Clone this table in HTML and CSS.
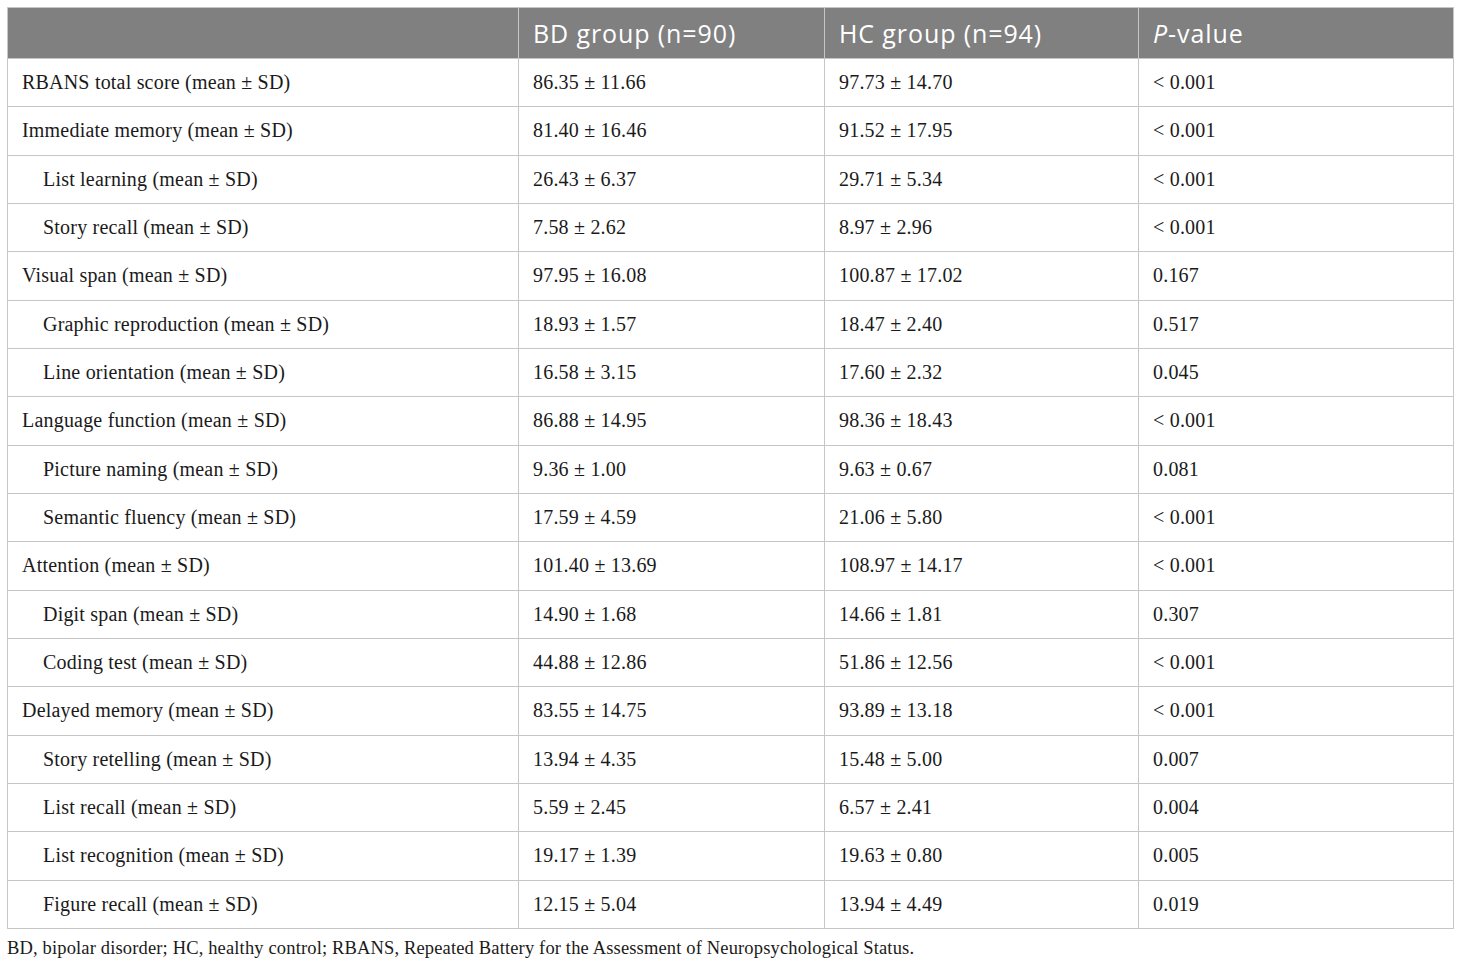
FILE: index.html
```html
<!DOCTYPE html>
<html lang="en">
<head>
<meta charset="UTF-8">
<title>RBANS scores</title>
<link rel="stylesheet" href="styles.css">
</head>
<body>

<table class="data">
  <colgroup>
    <col class="c1"><col class="c2"><col class="c3"><col class="c4">
  </colgroup>
  <thead>
    <tr>
      <th></th>
      <th>BD group (n=90)</th>
      <th>HC group (n=94)</th>
      <th><i>P</i>-value</th>
    </tr>
  </thead>
  <tbody>
    <tr><td>RBANS total score (mean ± SD)</td><td>86.35 ± 11.66</td><td>97.73 ± 14.70</td><td>&lt; 0.001</td></tr>
    <tr><td>Immediate memory (mean ± SD)</td><td>81.40 ± 16.46</td><td>91.52 ± 17.95</td><td>&lt; 0.001</td></tr>
    <tr><td class="sub">List learning (mean ± SD)</td><td>26.43 ± 6.37</td><td>29.71 ± 5.34</td><td>&lt; 0.001</td></tr>
    <tr><td class="sub">Story recall (mean ± SD)</td><td>7.58 ± 2.62</td><td>8.97 ± 2.96</td><td>&lt; 0.001</td></tr>
    <tr><td>Visual span (mean ± SD)</td><td>97.95 ± 16.08</td><td>100.87 ± 17.02</td><td>0.167</td></tr>
    <tr><td class="sub">Graphic reproduction (mean ± SD)</td><td>18.93 ± 1.57</td><td>18.47 ± 2.40</td><td>0.517</td></tr>
    <tr><td class="sub">Line orientation (mean ± SD)</td><td>16.58 ± 3.15</td><td>17.60 ± 2.32</td><td>0.045</td></tr>
    <tr><td>Language function (mean ± SD)</td><td>86.88 ± 14.95</td><td>98.36 ± 18.43</td><td>&lt; 0.001</td></tr>
    <tr><td class="sub">Picture naming (mean ± SD)</td><td>9.36 ± 1.00</td><td>9.63 ± 0.67</td><td>0.081</td></tr>
    <tr><td class="sub">Semantic fluency (mean ± SD)</td><td>17.59 ± 4.59</td><td>21.06 ± 5.80</td><td>&lt; 0.001</td></tr>
    <tr><td>Attention (mean ± SD)</td><td>101.40 ± 13.69</td><td>108.97 ± 14.17</td><td>&lt; 0.001</td></tr>
    <tr><td class="sub">Digit span (mean ± SD)</td><td>14.90 ± 1.68</td><td>14.66 ± 1.81</td><td>0.307</td></tr>
    <tr><td class="sub">Coding test (mean ± SD)</td><td>44.88 ± 12.86</td><td>51.86 ± 12.56</td><td>&lt; 0.001</td></tr>
    <tr><td>Delayed memory (mean ± SD)</td><td>83.55 ± 14.75</td><td>93.89 ± 13.18</td><td>&lt; 0.001</td></tr>
    <tr><td class="sub">Story retelling (mean ± SD)</td><td>13.94 ± 4.35</td><td>15.48 ± 5.00</td><td>0.007</td></tr>
    <tr><td class="sub">List recall (mean ± SD)</td><td>5.59 ± 2.45</td><td>6.57 ± 2.41</td><td>0.004</td></tr>
    <tr><td class="sub">List recognition (mean ± SD)</td><td>19.17 ± 1.39</td><td>19.63 ± 0.80</td><td>0.005</td></tr>
    <tr><td class="sub">Figure recall (mean ± SD)</td><td>12.15 ± 5.04</td><td>13.94 ± 4.49</td><td>0.019</td></tr>
  </tbody>
</table>

<p class="note">BD, bipolar disorder; HC, healthy control; RBANS, Repeated Battery for the Assessment of Neuropsychological Status.</p>

</body>
</html>
```

FILE: styles.css
```css
body {
  margin: 0;
  padding: 7px 7px 0 7px;
  background: #fff;
  color: #1a1a1a;
  font-family: "Liberation Serif", "Times New Roman", serif;
}
.data {
  width: 1446px;
  border-collapse: collapse;
  table-layout: fixed;
}
.c1 { width: 511px; }
.c2 { width: 306px; }
.c3 { width: 314px; }
.c4 { width: 315px; }
.data th {
  background-color: #7f807f;
  color: #fff;
  font-family: "Open Sans", sans-serif;
  font-weight: normal;
  font-size: 25px;
  letter-spacing: 0.9px;
  text-align: left;
  height: 51px;
  padding: 0 14px;
  border: 1px solid #c6c6c6;
  box-sizing: border-box;
}
.data td {
  height: 48.33px;
  padding: 0 14px;
  font-size: 20px;
  letter-spacing: 0.2px;
  border: 1px solid #c6c6c6;
  box-sizing: border-box;
}
.data td.sub {
  padding-left: 35px;
}
.note {
  margin: 9px 0 0 0;
  font-size: 18.5px;
  letter-spacing: 0.15px;
}
```
